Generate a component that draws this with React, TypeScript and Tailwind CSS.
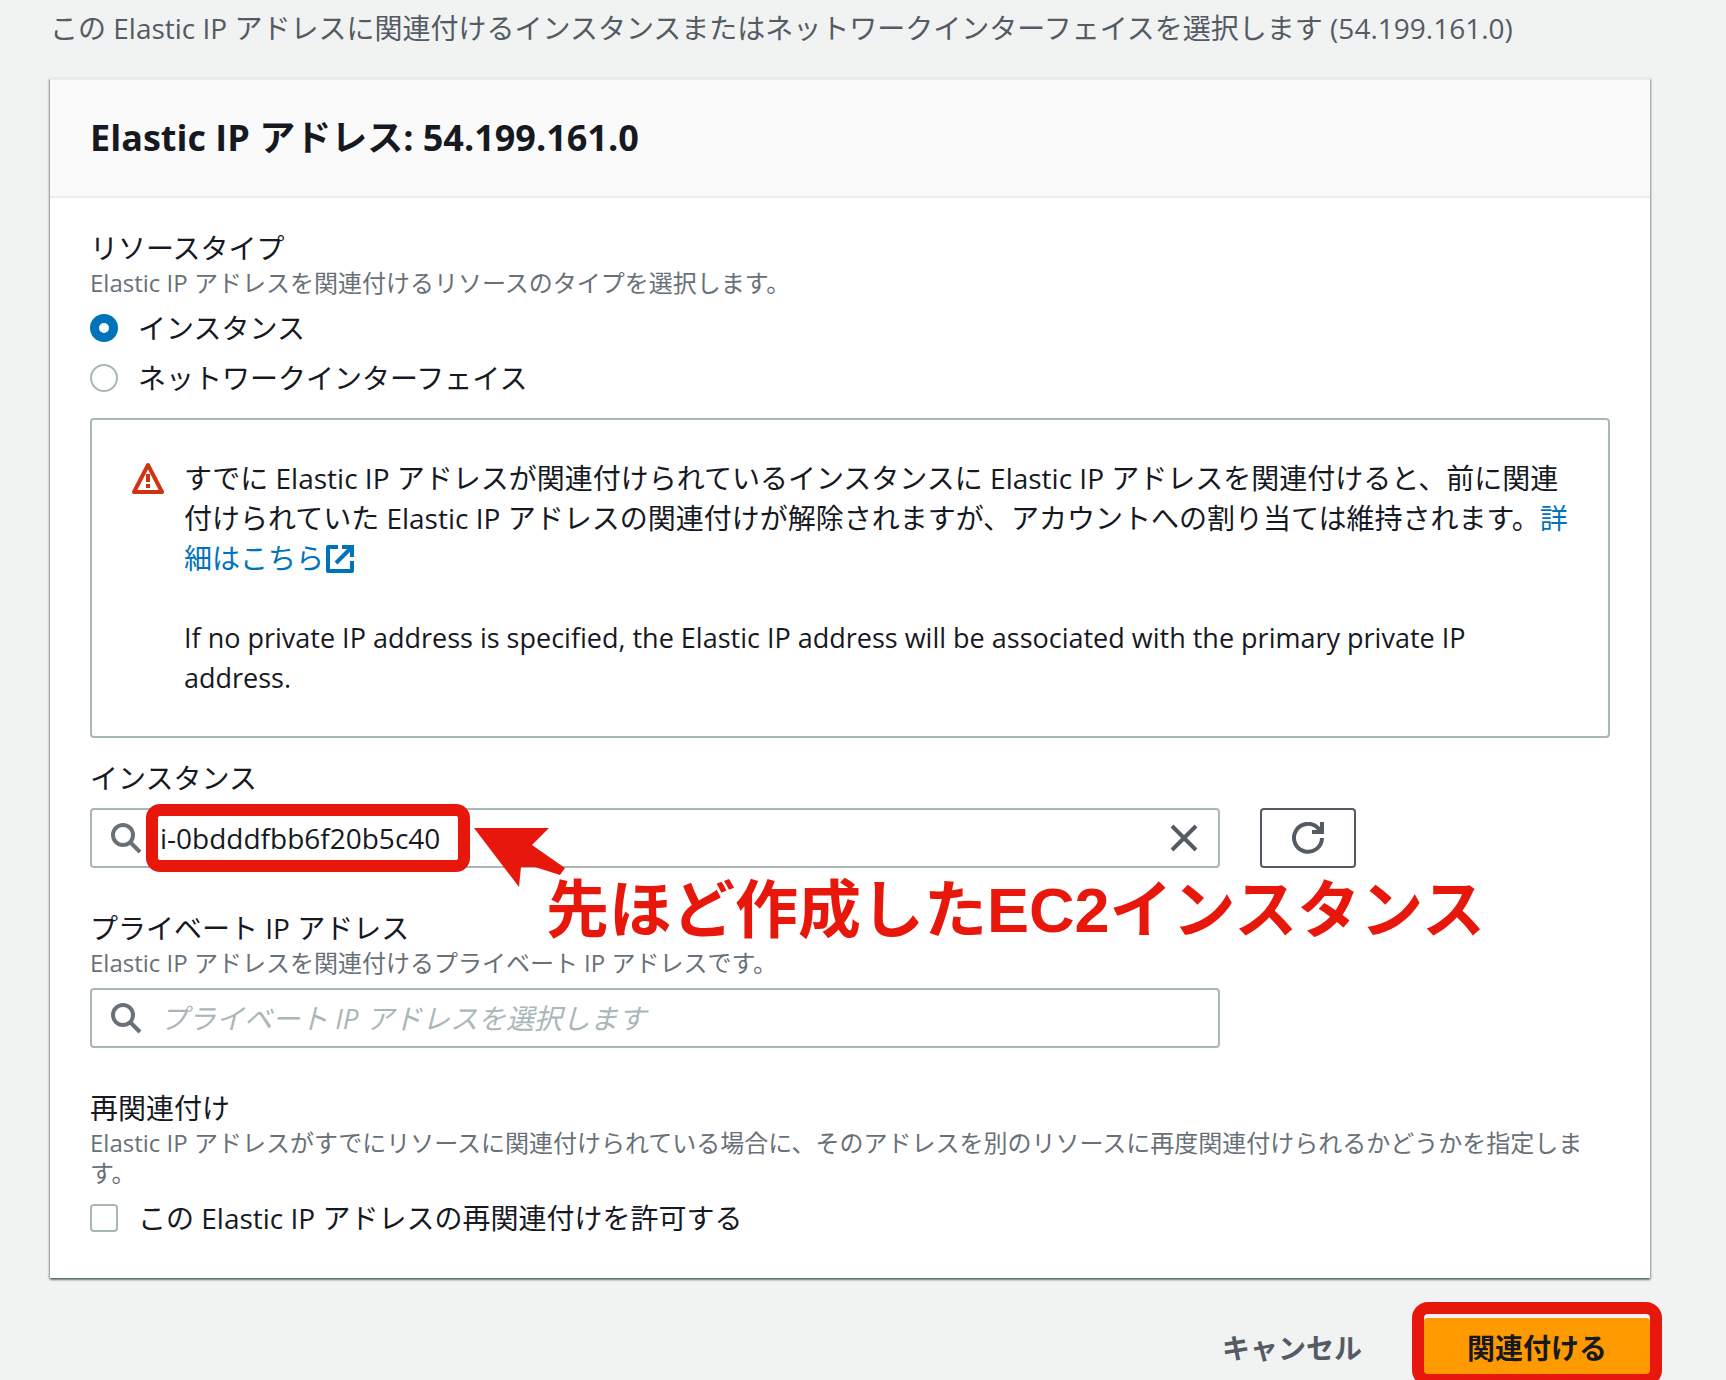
import { useState } from "react";
import type { ReactNode } from "react";

function SearchIcon() {
  return (
    <svg viewBox="0 0 32 32" className="size-8 shrink-0" fill="none" stroke="#687078" strokeWidth="4" aria-hidden="true">
      <circle cx="13" cy="13" r="10" />
      <path d="M20 20L30 30" />
    </svg>
  );
}

function CloseIcon() {
  return (
    <svg viewBox="0 0 32 32" className="size-8" fill="none" stroke="#545b64" strokeWidth="4" aria-hidden="true">
      <path d="M4 4L28 28M28 4L4 28" />
    </svg>
  );
}

function RefreshIcon() {
  return (
    <svg viewBox="0 0 32 32" className="size-8" fill="none" stroke="#545b64" strokeWidth="4" aria-hidden="true">
      <path d="M30 16A14 14 0 1 1 26 6L29 10" />
      <path d="M20 10H30V0" />
    </svg>
  );
}

function WarningIcon() {
  return (
    <svg viewBox="0 0 32 32" className="mt-1 size-8 shrink-0" fill="none" stroke="#d13212" strokeWidth="4" aria-hidden="true">
      <path d="M16 3L30 30H2Z" strokeLinejoin="round" />
      <path d="M16 12V20M16 22V26" />
    </svg>
  );
}

function ExternalIcon() {
  return (
    <svg viewBox="0 0 32 32" className="inline size-8 align-[-6px]" fill="none" stroke="#0073bb" strokeWidth="4" aria-hidden="true">
      <path d="M14 4H4V28H28V18" strokeLinejoin="round" />
      <path d="M18 4H28V14M28 4L12 20" />
    </svg>
  );
}

function Field({ label, hint, htmlFor, children }: { label: string; hint?: string; htmlFor: string; children: ReactNode }) {
  return (
    <div>
      <label htmlFor={htmlFor} className="block leading-10">
        {label}
      </label>
      {hint && <p className="text-2xl leading-[30px] text-[#687078]">{hint}</p>}
      <div className="mt-[10px]">{children}</div>
    </div>
  );
}

const inputBox = "flex h-[60px] flex-1 items-center rounded-[4px] border-2 border-[#aab7b8] bg-white px-[18px]";
const radioInput =
  "size-7 shrink-0 appearance-none rounded-full border-2 border-[#aab7b8] bg-white checked:border-[9px] checked:border-[#0073bb]";

export default function App() {
  const [resource, setResource] = useState("instance");
  const [instance, setInstance] = useState("i-0bdddfbb6f20b5c40");

  return (
    <div
      lang="ja"
      className="h-screen overflow-hidden bg-[#f0f3f2] pt-2 pr-[76px] pl-[50px] font-['Open_Sans','Noto_Sans_CJK_JP',sans-serif] text-[28px] leading-10 text-[#16191f]"
    >
      <p className="text-[#545b64]">
        この Elastic IP アドレスに関連付けるインスタンスまたはネットワークインターフェイスを選択します (54.199.161.0)
      </p>

      <main className="mt-[30px] border-t-2 border-[#eaeded] bg-white shadow-[0_2px_2px_0_rgba(0,28,36,0.4),1px_1px_2px_0_rgba(0,28,36,0.3),-1px_1px_2px_0_rgba(0,28,36,0.3)]">
        <header className="border-b-2 border-[#eaeded] bg-[#fafafa] px-10 py-8">
          <h1 className="text-4xl leading-[52px] font-bold">Elastic IP アドレス: 54.199.161.0</h1>
        </header>

        <form className="px-10 pt-[30px] pb-10">
          <fieldset>
            <legend className="block leading-10">リソースタイプ</legend>
            <p className="text-2xl leading-[30px] text-[#687078]">
              Elastic IP アドレスを関連付けるリソースのタイプを選択します。
            </p>
            <div className="mt-[10px] flex flex-col gap-[10px]">
              <label className="flex items-center gap-5">
                <input
                  type="radio"
                  name="resource"
                  className={radioInput}
                  checked={resource === "instance"}
                  onChange={() => setResource("instance")}
                />
                インスタンス
              </label>
              <label className="flex items-center gap-5">
                <input
                  type="radio"
                  name="resource"
                  className={radioInput}
                  checked={resource === "network"}
                  onChange={() => setResource("network")}
                />
                ネットワークインターフェイス
              </label>
            </div>
          </fieldset>

          <div className="my-5 flex gap-5 rounded-[4px] border-2 border-[#aab7b8] py-[38px] pr-9 pl-10">
            <WarningIcon />
            <div>
              <p>
                すでに Elastic IP アドレスが関連付けられているインスタンスに Elastic IP アドレスを関連付けると、前に関連付けられていた
                Elastic IP アドレスの関連付けが解除されますが、アカウントへの割り当ては維持されます。
                <a href="#details" className="text-[#0073bb]">
                  詳細はこちら
                  <ExternalIcon />
                </a>
              </p>
              <p className="mt-10 text-[27px] font-medium">
                If no private IP address is specified, the Elastic IP address will be associated with the primary private IP
                address.
              </p>
            </div>
          </div>

          <div className="flex flex-col gap-10">
            <Field label="インスタンス" htmlFor="instance">
              <div className="relative flex gap-10 pr-[254px]">
                <div className={inputBox}>
                  <SearchIcon />
                  <input
                    id="instance"
                    className="ml-[18px] min-w-0 flex-1 font-medium outline-none"
                    value={instance}
                    onChange={(e) => setInstance(e.target.value)}
                  />
                  <button type="button" aria-label="クリア" onClick={() => setInstance("")}>
                    <CloseIcon />
                  </button>
                </div>
                <button
                  type="button"
                  aria-label="更新"
                  className="flex h-[60px] w-24 items-center justify-center rounded-[4px] border-2 border-[#545b64]"
                >
                  <RefreshIcon />
                </button>

                {/* callout over the selected instance */}
                <div className="pointer-events-none absolute -top-1 left-14 h-[68px] w-[324px] rounded-[14px] border-12 border-[#e7180b]" />
                <svg viewBox="0 0 92 60" className="absolute top-5 left-96 h-[60px] w-[92px]" fill="#e7180b" aria-hidden="true">
                  <path d="M0 0H75L58 17L91 40L86 47L61 39H47L45 59Z" />
                </svg>
                <p className="absolute top-[66px] left-[456px] font-['Liberation_Sans','Noto_Sans_CJK_JP',sans-serif] text-[63px] leading-[72px] font-bold whitespace-nowrap text-[#e7180b]">
                  先ほど作成したEC2インスタンス
                </p>
              </div>
            </Field>

            <Field
              label="プライベート IP アドレス"
              hint="Elastic IP アドレスを関連付けるプライベート IP アドレスです。"
              htmlFor="private-ip"
            >
              <div className="flex pr-[390px]">
                <div className={inputBox}>
                  <SearchIcon />
                  <input
                    id="private-ip"
                    className="ml-[18px] min-w-0 flex-1 outline-none placeholder:text-[#aab7b8] placeholder:italic"
                    placeholder="プライベート IP アドレスを選択します"
                  />
                </div>
              </div>
            </Field>

            <fieldset>
              <legend className="block leading-10">再関連付け</legend>
              <p className="text-2xl leading-[30px] text-[#687078]">
                Elastic IP アドレスがすでにリソースに関連付けられている場合に、そのアドレスを別のリソースに再度関連付けられるかどうかを指定します。
              </p>
              <label className="mt-[10px] flex items-center gap-5">
                <input
                  type="checkbox"
                  className="size-7 shrink-0 appearance-none rounded-[4px] border-2 border-[#aab7b8] bg-white checked:bg-[#0073bb]"
                />
                この Elastic IP アドレスの再関連付けを許可する
              </label>
            </fieldset>
          </div>
        </form>
      </main>

      <footer className="mt-10 flex items-center justify-end gap-[22px] font-bold">
        <button type="button" className="h-[60px] px-10 text-[#545b64]">
          キャンセル
        </button>
        <div className="relative">
          <button type="submit" className="h-[60px] rounded-[4px] bg-[#ff9900] px-[43px]">
            関連付ける
          </button>
          <div className="pointer-events-none absolute -inset-x-3 -top-4 h-[84px] rounded-[16px] border-12 border-[#e7180b]" />
        </div>
      </footer>
    </div>
  );
}
